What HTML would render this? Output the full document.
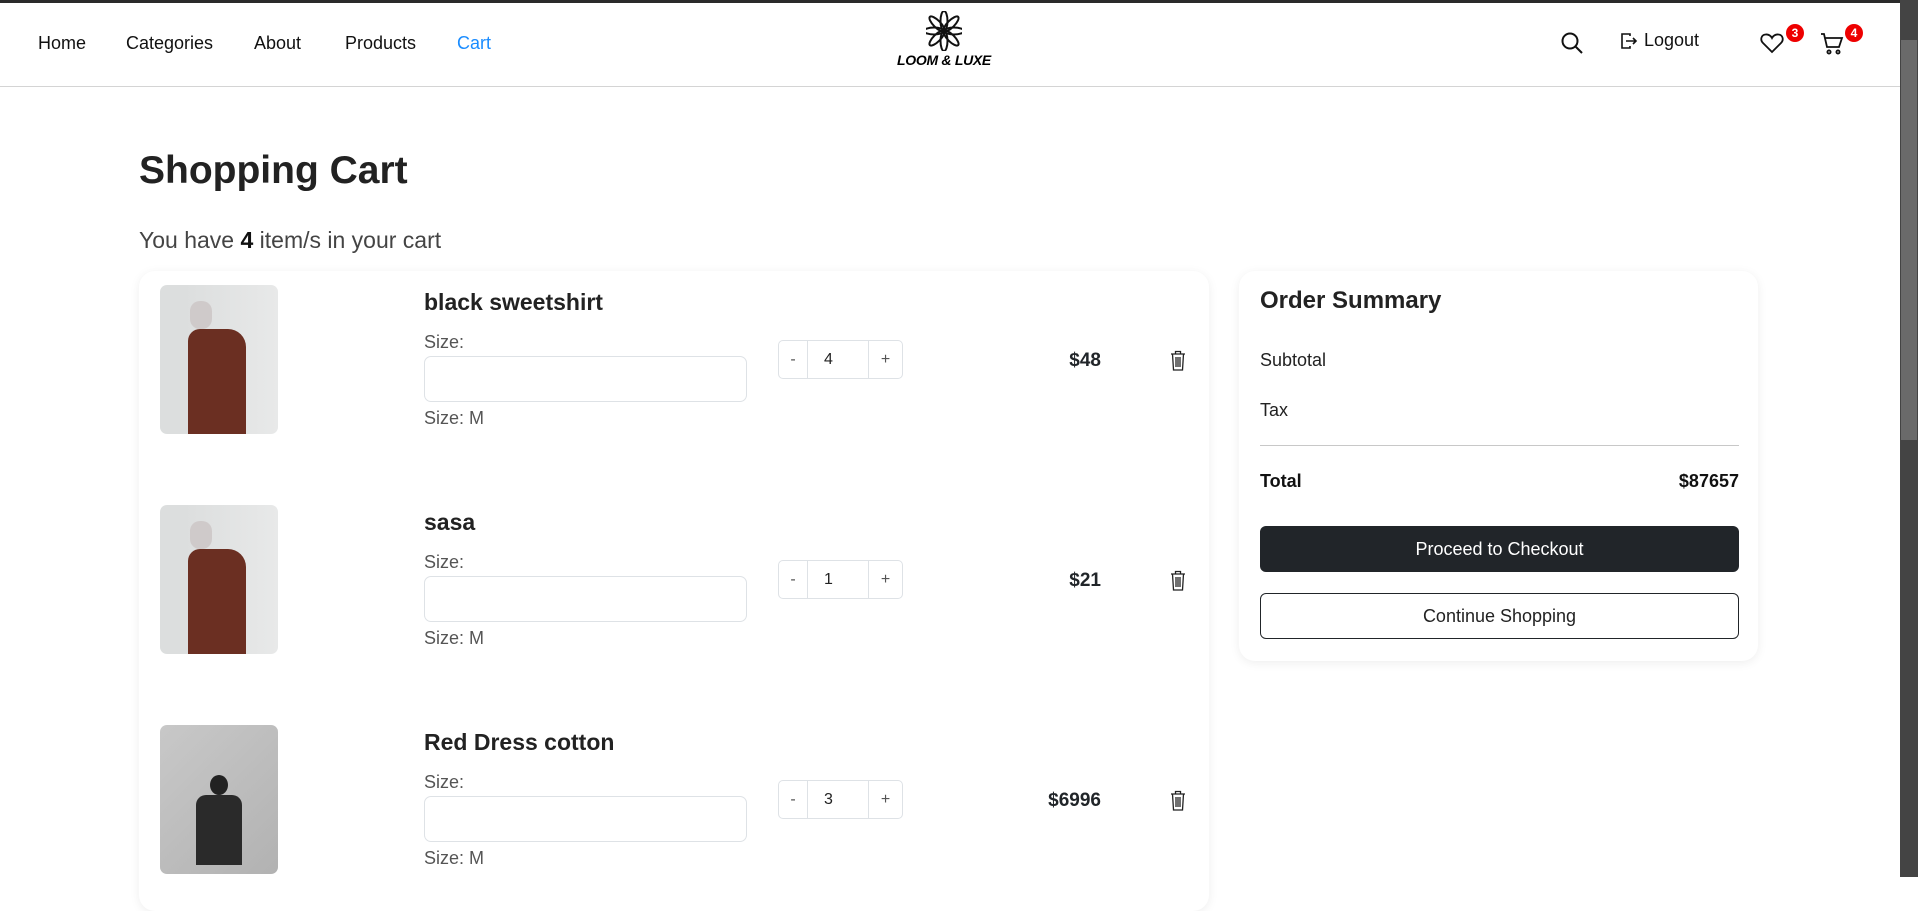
<!DOCTYPE html>
<html><head><meta charset="utf-8"><style>
*{box-sizing:border-box;margin:0;padding:0}
body{width:1918px;height:877px;overflow:hidden;background:#fff;font-family:"Liberation Sans",sans-serif;color:#212529;position:relative}
.abs{position:absolute}
.topbar{left:0;top:0;width:1918px;height:3px;background:#2a2a2a}
.nav{left:0;top:3px;width:1900px;height:84px;border-bottom:1px solid #d4d4d4}
.nav a{position:absolute;top:30px;font-size:18px;color:#111;text-decoration:none}
.scroll{left:1900px;top:0;width:18px;height:877px;background:#444}
.thumb{left:1901px;top:40px;width:16px;height:400px;background:#6a6a6a}
.card{background:#fff;border-radius:16px;box-shadow:0 2px 10px rgba(0,0,0,.07)}
.img{border-radius:7px;overflow:hidden}
.name{font-size:23px;font-weight:bold;color:#222}
.lbl{font-size:18px;color:#555}
.inp{border:1px solid #dee2e6;border-radius:7px;background:#fff}
.qty{border:1px solid #dee2e6;border-radius:5px;display:flex;font-size:16px;color:#555}
.qty div{display:flex;align-items:center;justify-content:center}
.price{font-size:19px;font-weight:bold;text-align:right;width:120px}
.badge{background:#e00;color:#fff;border-radius:50%;width:18px;height:18px;font-size:12px;font-weight:bold;display:flex;align-items:center;justify-content:center}
</style></head><body>
<div class="abs topbar"></div>
<div class="abs nav">
<a style="left:38px">Home</a><a style="left:126px">Categories</a><a style="left:254px">About</a><a style="left:345px">Products</a><a style="left:457px;color:#1a8cff">Cart</a>
</div>
<svg class="abs" style="left:926px;top:11px" width="36" height="40" viewBox="0 0 36 40" fill="none" stroke="#111" stroke-width="2">
<g transform="translate(18,20)">
<ellipse cx="0" cy="-10" rx="3.5" ry="10"/><ellipse cx="0" cy="-10" rx="3.5" ry="10" transform="rotate(45)"/><ellipse cx="0" cy="-10" rx="3.5" ry="10" transform="rotate(90)"/><ellipse cx="0" cy="-10" rx="3.5" ry="10" transform="rotate(135)"/><ellipse cx="0" cy="-10" rx="3.5" ry="10" transform="rotate(180)"/><ellipse cx="0" cy="-10" rx="3.5" ry="10" transform="rotate(225)"/><ellipse cx="0" cy="-10" rx="3.5" ry="10" transform="rotate(270)"/><ellipse cx="0" cy="-10" rx="3.5" ry="10" transform="rotate(315)"/></g></svg>
<div class="abs" style="left:892px;top:52px;width:104px;text-align:center;font-size:14px;font-weight:900;font-style:italic;color:#000;letter-spacing:-0.3px">LOOM &amp; LUXE</div>
<svg class="abs" style="left:1560px;top:31px" width="24" height="24" viewBox="0 0 24 24" fill="none" stroke="#111" stroke-width="2"><circle cx="10" cy="10" r="7.5"/><path d="M15.5 15.5L22 22"/></svg>
<svg class="abs" style="left:1620px;top:32px" width="18" height="18" viewBox="0 0 18 18" fill="none" stroke="#111" stroke-width="1.6"><path d="M10 4V2H2v14h8v-2"/><path d="M6 9h10M13 6l3 3-3 3"/></svg>
<div class="abs" style="left:1644px;top:30px;font-size:18px;color:#111">Logout</div>
<svg class="abs" style="left:1760px;top:32px" width="24" height="22" viewBox="0 0 24 22" fill="none" stroke="#111" stroke-width="1.8"><path d="M12 20L3 11C0 8 1 3 5.5 2.5 8.5 2 11 4 12 6c1-2 3.5-4 6.5-3.5C23 3 24 8 21 11z"/></svg>
<div class="abs badge" style="left:1786px;top:24px">3</div>
<svg class="abs" style="left:1820px;top:32px" width="24" height="24" viewBox="0 0 24 24" fill="none" stroke="#111" stroke-width="1.8"><path d="M1 2h3l3 13h12l3-9H5.5"/><circle cx="9" cy="20" r="1.6"/><circle cx="18" cy="20" r="1.6"/></svg>
<div class="abs badge" style="left:1845px;top:24px">4</div>
<div class="abs scroll"></div><div class="abs thumb"></div>

<div class="abs" style="left:139px;top:149px;font-size:39px;font-weight:bold;color:#222">Shopping Cart</div>
<div class="abs" style="left:139px;top:227px;font-size:23px;color:#444">You have <b style="color:#111">4</b> item/s in your cart</div>

<div class="abs card" style="left:139px;top:271px;width:1070px;height:640px"></div>
<div class="abs card" style="left:1239px;top:271px;width:519px;height:390px"></div>

<div class="abs img" style="left:160px;top:285px;width:118px;height:149px;background:linear-gradient(90deg,#dcdede 0,#dcdede 20%,#e8e9e9 100%)"><div style="position:absolute;left:30px;top:16px;width:22px;height:28px;border-radius:10px;background:#cfcaca"></div><div style="position:absolute;left:28px;top:44px;width:58px;height:105px;border-radius:12px 18px 0 0;background:#6b2f22"></div></div>
<div class="abs img" style="left:160px;top:505px;width:118px;height:149px;background:linear-gradient(90deg,#dcdede 0,#dcdede 20%,#e8e9e9 100%)"><div style="position:absolute;left:30px;top:16px;width:22px;height:28px;border-radius:10px;background:#cfcaca"></div><div style="position:absolute;left:28px;top:44px;width:58px;height:105px;border-radius:12px 18px 0 0;background:#6b2f22"></div></div>
<div class="abs img" style="left:160px;top:725px;width:118px;height:149px;background:linear-gradient(135deg,#c8c8c8,#b2b2b2)"><div style="position:absolute;left:50px;top:50px;width:18px;height:20px;border-radius:50%;background:#222"></div><div style="position:absolute;left:36px;top:70px;width:46px;height:70px;border-radius:10px 10px 0 0;background:#2a2a2a"></div></div>

<div class="abs name" style="left:424px;top:289px">black sweetshirt</div>
<div class="abs lbl" style="left:424px;top:332px">Size:</div>
<div class="abs inp" style="left:424px;top:356px;width:323px;height:46px"></div>
<div class="abs lbl" style="left:424px;top:408px">Size: M</div>
<div class="abs qty" style="left:778px;top:340px;width:125px;height:39px"><div style="width:29px;border-right:1px solid #dee2e6">-</div><div style="width:60px;color:#222;justify-content:flex-start;padding-left:16px">4</div><div style="width:34px;border-left:1px solid #dee2e6">+</div></div>
<div class="abs price" style="left:981px;top:350px">$48</div>

<div class="abs name" style="left:424px;top:509px">sasa</div>
<div class="abs lbl" style="left:424px;top:552px">Size:</div>
<div class="abs inp" style="left:424px;top:576px;width:323px;height:46px"></div>
<div class="abs lbl" style="left:424px;top:628px">Size: M</div>
<div class="abs qty" style="left:778px;top:560px;width:125px;height:39px"><div style="width:29px;border-right:1px solid #dee2e6">-</div><div style="width:60px;color:#222;justify-content:flex-start;padding-left:16px">1</div><div style="width:34px;border-left:1px solid #dee2e6">+</div></div>
<div class="abs price" style="left:981px;top:570px">$21</div>

<div class="abs name" style="left:424px;top:729px">Red Dress cotton</div>
<div class="abs lbl" style="left:424px;top:772px">Size:</div>
<div class="abs inp" style="left:424px;top:796px;width:323px;height:46px"></div>
<div class="abs lbl" style="left:424px;top:848px">Size: M</div>
<div class="abs qty" style="left:778px;top:780px;width:125px;height:39px"><div style="width:29px;border-right:1px solid #dee2e6">-</div><div style="width:60px;color:#222;justify-content:flex-start;padding-left:16px">3</div><div style="width:34px;border-left:1px solid #dee2e6">+</div></div>
<div class="abs price" style="left:981px;top:790px">$6996</div>

<svg class="abs" style="left:1170px;top:350px" width="16" height="21" viewBox="0 0 16 21" fill="none" stroke="#222" stroke-width="1.3"><path d="M1 4h14M5.5 4V1.5h5V4M2.5 4l1 16h9l1-16M6 7v10M8 7v10M10 7v10"/></svg>
<svg class="abs" style="left:1170px;top:570px" width="16" height="21" viewBox="0 0 16 21" fill="none" stroke="#222" stroke-width="1.3"><path d="M1 4h14M5.5 4V1.5h5V4M2.5 4l1 16h9l1-16M6 7v10M8 7v10M10 7v10"/></svg>
<svg class="abs" style="left:1170px;top:790px" width="16" height="21" viewBox="0 0 16 21" fill="none" stroke="#222" stroke-width="1.3"><path d="M1 4h14M5.5 4V1.5h5V4M2.5 4l1 16h9l1-16M6 7v10M8 7v10M10 7v10"/></svg>

<div class="abs" style="left:1260px;top:287px;font-size:24px;font-weight:bold;color:#222">Order Summary</div>
<div class="abs" style="left:1260px;top:350px;font-size:18px;color:#222">Subtotal</div>
<div class="abs" style="left:1260px;top:400px;font-size:18px;color:#222">Tax</div>
<div class="abs" style="left:1260px;top:445px;width:479px;height:1px;background:#c8c8c8"></div>
<div class="abs" style="left:1260px;top:471px;font-size:18px;font-weight:bold;color:#111">Total</div>
<div class="abs" style="left:1560px;top:471px;width:179px;text-align:right;font-size:18px;font-weight:bold;color:#111">$87657</div>
<div class="abs" style="left:1260px;top:526px;width:479px;height:46px;background:#212529;border-radius:6px;color:#fff;font-size:18px;display:flex;align-items:center;justify-content:center">Proceed to Checkout</div>
<div class="abs" style="left:1260px;top:593px;width:479px;height:46px;border:1px solid #212529;border-radius:6px;color:#222;font-size:18px;display:flex;align-items:center;justify-content:center">Continue Shopping</div>
</body></html>
